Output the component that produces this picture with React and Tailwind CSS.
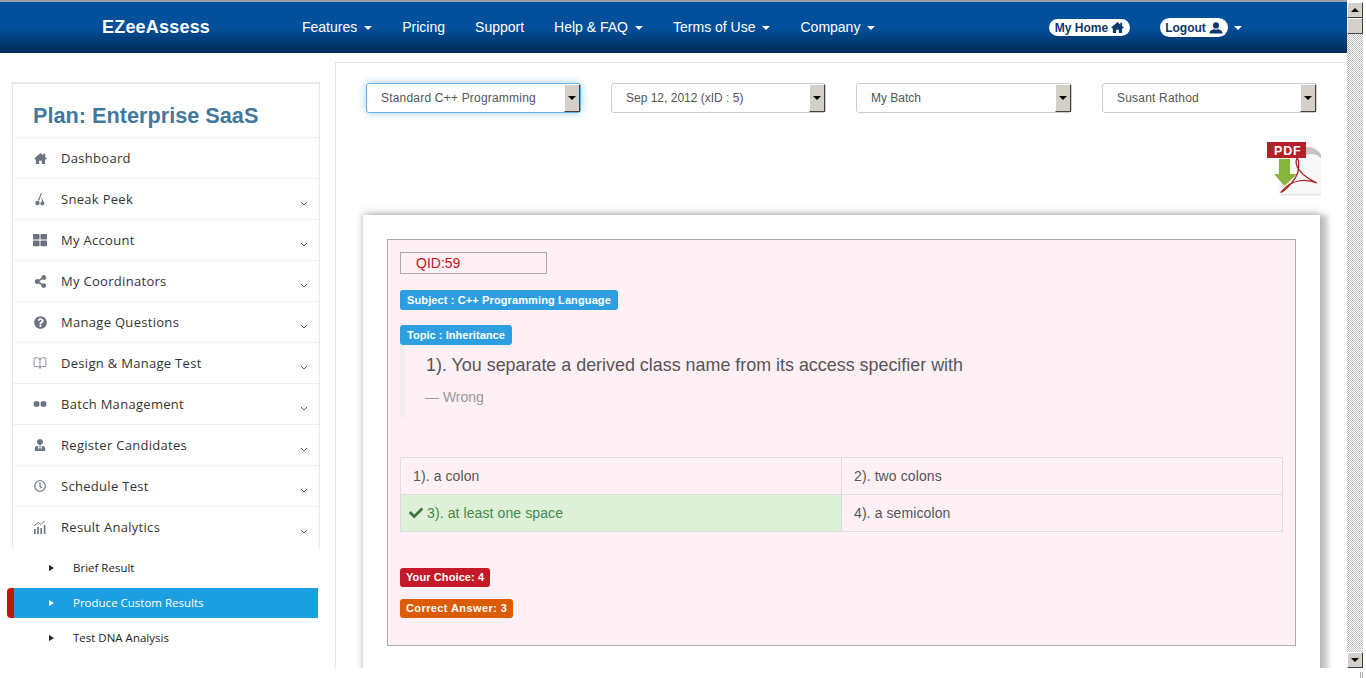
import React from "react";
import {
  FaThLarge,
  FaShareAlt,
  FaQuestionCircle,
  FaCheck,
  FaUserTie,
  FaRegClock,
} from "react-icons/fa";
import { LuBookOpen } from "react-icons/lu";

const arial = { fontFamily: '"Liberation Sans", Arial, sans-serif' };

function Caret({ className }) {
  return (
    <span
      className={`inline-block w-0 h-0 border-x-[4px] border-x-transparent border-t-[4px] ${className}`}
    />
  );
}

function HomeIcon({ size = 14, color = "currentColor" }) {
  return (
    <svg width={size} height={size} viewBox="0 0 14 14" fill={color}>
      <path d="M7 1 L10 3.7 V2 H12 V5.5 L14 7.4 L12 8.2 V13 H8.5 V9.5 H5.5 V13 H2 V8.2 L0 7.4 Z" />
    </svg>
  );
}

function UserIcon() {
  return (
    <svg width="14" height="12" viewBox="0 0 14 12" fill="currentColor">
      <ellipse cx="7" cy="3.4" rx="3" ry="3.2" />
      <path d="M0.5 11.5 C0.5 8.4 3.6 7.4 5 7.2 C6 7.8 8 7.8 9 7.2 C10.4 7.4 13.5 8.4 13.5 11.5 Z" />
    </svg>
  );
}

function SneakIcon() {
  return (
    <svg width="14" height="14" viewBox="0 0 14 14" fill="#6b7280">
      <path d="M8 1 L9 1 L6 9 L5 8 Z" />
      <circle cx="4.5" cy="11" r="2.2" />
      <path d="M8.2 5 L10.8 10 A2 2 0 1 1 7.6 10.4 L9 9.5 Z" />
    </svg>
  );
}

function DotsIcon() {
  return (
    <svg width="14" height="14" viewBox="0 0 14 14" fill="#6b7280">
      <circle cx="3.5" cy="7" r="3" />
      <circle cx="10.5" cy="7" r="3" />
    </svg>
  );
}

function ChartIcon() {
  return (
    <svg width="14" height="14" viewBox="0 0 14 14" fill="#6b7280">
      <rect x="1" y="9" width="1.6" height="5" />
      <rect x="4.2" y="7" width="1.6" height="7" />
      <rect x="7.4" y="8" width="1.6" height="6" />
      <rect x="10.8" y="5" width="1.6" height="9" />
      <path d="M1 6 L5 2.5 L8 4.5 L11.5 1" stroke="#6b7280" strokeWidth="1" fill="none" />
    </svg>
  );
}

const menu = [
  { label: "Dashboard", icon: <HomeIcon size={13} color="#6b7280" /> },
  { label: "Sneak Peek", icon: <SneakIcon />, sub: true },
  { label: "My Account", icon: <FaThLarge size={14} color="#6b7280" />, sub: true },
  { label: "My Coordinators", icon: <FaShareAlt size={13} color="#6b7280" />, sub: true },
  { label: "Manage Questions", icon: <FaQuestionCircle size={13} color="#6b7280" />, sub: true },
  { label: "Design & Manage Test", icon: <LuBookOpen size={14} color="#6b7280" strokeWidth={1.3} />, sub: true },
  { label: "Batch Management", icon: <DotsIcon />, sub: true },
  { label: "Register Candidates", icon: <FaUserTie size={12} color="#6b7280" />, sub: true },
  { label: "Schedule Test", icon: <FaRegClock size={12} color="#6b7280" />, sub: true },
  { label: "Result Analytics", icon: <ChartIcon />, sub: true },
];

const subMenu = [
  { label: "Brief Result" },
  { label: "Produce Custom Results", active: true },
  { label: "Test DNA Analysis" },
];

const nav = [
  { label: "Features", caret: true },
  { label: "Pricing" },
  { label: "Support" },
  { label: "Help & FAQ", caret: true },
  { label: "Terms of Use", caret: true },
  { label: "Company", caret: true },
];

const selects = [
  { label: "Standard C++ Programming", focus: true, w: "w-[215px]", track: "tracking-[0.2px]" },
  { label: "Sep 12, 2012 (xID : 5)", w: "w-[215px]", track: "" },
  { label: "My Batch", w: "w-[216px]", track: "" },
  { label: "Susant Rathod", w: "w-[215px]", track: "tracking-[0.2px]" },
];

function Header() {
  return (
    <header className="h-[53px] shrink-0 flex items-center border-t-2 border-[#9a9fa6] bg-gradient-to-b from-[#02509c] from-50% to-[#012c58] text-white">
      <div className="w-[302px] pl-[102px] text-[18px] font-bold tracking-[0.2px]">EZeeAssess</div>
      <nav className="flex gap-[30px] w-[747px] text-[14px]">
        {nav.map((n) => (
          <span key={n.label} className="flex items-center gap-[7px]">
            {n.label}
            {n.caret && <Caret className="border-t-white" />}
          </span>
        ))}
      </nav>
      <span className="w-[81px] h-[17px] rounded-full bg-white text-[#0b3a6d] text-[12px] font-bold flex items-center justify-center gap-[3px]">
        My Home <HomeIcon size={13} />
      </span>
      <span className="ml-[30px] w-[68px] h-[19px] rounded-full bg-white text-[#0b3a6d] text-[12px] font-bold flex items-center justify-center gap-[3px]">
        Logout <UserIcon />
      </span>
      <Caret className="ml-[6px] border-t-white" />
    </header>
  );
}

function Sidebar() {
  return (
    <aside className="w-[335px] shrink-0 pt-[29px]" style={{ fontFamily: '"Open Sans", sans-serif' }}>
      <div className="ml-[12px] w-[308px] pb-[1px] border border-t-2 border-b-0 border-[#e8e8e8]">
        <div className="h-[53px] pl-[20px] pt-[12px] flex items-center text-[21.7px] font-bold text-[#41799c]" style={arial}>
          Plan: Enterprise SaaS
        </div>
        {menu.map((m) => (
          <div key={m.label} className="h-[41px] border-t border-[#eeeeee] flex items-center pl-[20px] text-[13px] tracking-[0.3px] text-[#333]">
            <span className="w-[14px] flex justify-center mr-[14px]">{m.icon}</span>
            <span className="flex-1 mt-[2px]">{m.label}</span>
            {m.sub && (
              <svg width="8" height="5" viewBox="0 0 8 5" className="mr-[11px] mt-[8px]" fill="none" stroke="#555" strokeWidth="1">
                <path d="M1 1 L4 4 L7 1" />
              </svg>
            )}
          </div>
        ))}
      </div>
      <div className="pt-[5px] text-[11.5px] flex flex-col gap-[5px]">
        {subMenu.map((s) => (
          <div
            key={s.label}
            className={`h-[30px] flex items-center ${
              s.active
                ? "ml-[7px] w-[311px] bg-[#1b9fe0] text-white border-l-[7px] border-[#c4140c] rounded-l-[4px] pl-[35px]"
                : "ml-[49px] text-[#222]"
            }`}
          >
            <span className={`w-0 h-0 border-y-[3px] border-y-transparent border-l-[5px] mr-[19px] ${s.active ? "border-l-white" : "border-l-[#222]"}`} />
            {s.label}
          </div>
        ))}
      </div>
    </aside>
  );
}

function PdfIcon() {
  return (
    <svg width="56" height="57" viewBox="0 0 56 57">
      <path d="M12 1 H40 Q54 6 55 16 V54 H12 Z" fill="#f8f8f8" />
      <path d="M40 7 Q48 6 55 14 L55 18 Q48 12 40 15 Z" fill="#c4c4c4" />
      <rect x="14" y="54" width="41" height="1.5" fill="#e5e5e5" />
      <rect x="1" y="2" width="39" height="16" fill="#b3202c" />
      <text x="8" y="15" fill="#fff" fontSize="12.5" fontWeight="700" letterSpacing="0.8" style={arial}>PDF</text>
      <path d="M13 19 H24 V34 H31 L18.5 46 L8 34 H13 Z" fill="#88b63c" />
      <path d="M31 18 C27 26 36 36 51 43 C42 39 26 38 15 52 C14 54 28 44 32 32 C33 26 33 20 31 18 Z" fill="none" stroke="#a51c1c" strokeWidth="1.2" />
    </svg>
  );
}

function Label({ className, children }) {
  return (
    <span className={`inline-flex items-center rounded-[3px] text-[11px] font-bold text-white ${className}`}>
      {children}
    </span>
  );
}

function Main() {
  return (
    <main className="flex-1 mt-[9px] border-l border-t border-[#e5e5e5]" style={arial}>
      <div className="flex gap-[30px] pl-[30px] pt-[20px]">
        {selects.map((s) => (
          <div
            key={s.label}
            className={`${s.w} h-[30px] flex items-center rounded-[3px] border bg-white text-[12px] text-[#555] ${
              s.focus ? "border-[#66afe9] shadow-[0_0_8px_rgba(102,175,233,0.6)]" : "border-[#cccccc]"
            }`}
          >
            <span className={`flex-1 pl-[14px] ${s.track}`}>{s.label}</span>
            <span className="w-[16px] h-[28px] flex items-center justify-center bg-[#d4d0c8] border-[1px] border-t-white border-l-white border-r-[#404040] border-b-[#404040]">
              <Caret className="border-t-black" />
            </span>
          </div>
        ))}
      </div>

      <div className="flex justify-end pr-[25px] mt-[27px] h-[75px]">
        <PdfIcon />
      </div>

      <div className="ml-[27px] w-[957px] h-[460px] bg-white p-[24px] shadow-[8px_0_5px_rgba(0,0,0,0.2),0_-3px_8px_rgba(0,0,0,0.15),-1px_0_5px_rgba(0,0,0,0.12)]">
        <div className="w-[909px] h-[407px] border border-[#aaaaaa] bg-[#fff0f5] px-[12px] pt-[12px]">
          <div className="w-[147px] h-[22px] border border-[#aaaaaa] pl-[15px] flex items-center text-[14px] text-[#c5121c]">QID:59</div>
          <div className="mt-[16px] flex">
            <Label className="h-[20px] px-[7px] bg-[#2d9fe0] tracking-[0.12px]">Subject : C++ Programming Language</Label>
          </div>
          <div className="mt-[15px] flex">
            <Label className="h-[20px] px-[7px] bg-[#2d9fe0] tracking-[0.05px]">Topic : Inheritance</Label>
          </div>
          <blockquote className="h-[72px] border-l-[5px] border-[#eeeeee] pl-[21px] pt-[9px]">
            <p className="text-[17.9px] leading-[22px] text-[#555]">1). You separate a derived class name from its access specifier with</p>
            <p className="mt-[11px] -ml-[1px] text-[14px] leading-[20px] text-[#999]">— Wrong</p>
          </blockquote>
          <div className="mt-[40px] w-[883px] grid grid-cols-[441px_441px] border-t border-l border-[#dddddd] text-[14px] tracking-[0.1px] text-[#555]">
            <div className="h-[37px] flex items-center pl-[12px] border-r border-b border-[#dddddd]">1). a colon</div>
            <div className="h-[37px] flex items-center pl-[12px] border-r border-b border-[#dddddd]">2). two colons</div>
            <div className="h-[37px] flex items-center pl-[8px] gap-[4px] border-r border-b border-[#dddddd] bg-[#dff0d8] text-[#468847]">
              <FaCheck size={14} color="#3c763d" />
              3). at least one space
            </div>
            <div className="h-[37px] flex items-center pl-[12px] border-r border-b border-[#dddddd]">4). a semicolon</div>
          </div>
          <div className="mt-[36px] flex">
            <Label className="h-[19px] px-[6px] bg-[#c41a28] tracking-[0.1px]">Your Choice: 4</Label>
          </div>
          <div className="mt-[12px] flex">
            <Label className="h-[19px] px-[6px] bg-[#dc5c05] tracking-[0.4px]">Correct Answer: 3</Label>
          </div>
        </div>
      </div>
    </main>
  );
}

function ScrollButton({ up }) {
  return (
    <div className="h-[16px] flex items-center justify-center bg-[#d4d0c8] border border-t-white border-l-white border-r-[#404040] border-b-[#404040]">
      <span className={`w-0 h-0 border-x-[4px] border-x-transparent ${up ? "border-b-[4px] border-b-black" : "border-t-[4px] border-t-black"}`} />
    </div>
  );
}

export default function App() {
  return (
    <div className="w-[1366px] h-[678px] overflow-hidden bg-white" style={arial}>
      <div className="flex h-[668px]">
        <div className="w-[1347px] h-[668px] overflow-hidden flex flex-col">
          <Header />
          <div className="flex flex-1 min-h-0">
            <Sidebar />
            <Main />
          </div>
        </div>
        <div className="w-[16px] mt-[2px] flex flex-col bg-[repeating-conic-gradient(#bdbdbd_0_25%,#ffffff_0_50%)] bg-[length:2px_2px]">
          <ScrollButton up />
          <div className="h-[16px] bg-[#d4d0c8] border border-t-white border-l-white border-r-[#404040] border-b-[#404040]" />
          <div className="flex-1" />
          <ScrollButton />
        </div>
      </div>
      <div className="h-[10px] flex justify-end gap-[1px] pr-[3px] pt-[4px]">
        <span className="w-[1px] h-[6px] bg-[#aaaaaa]" />
        <span className="w-[1px] h-[6px] bg-[#aaaaaa]" />
      </div>
    </div>
  );
}
